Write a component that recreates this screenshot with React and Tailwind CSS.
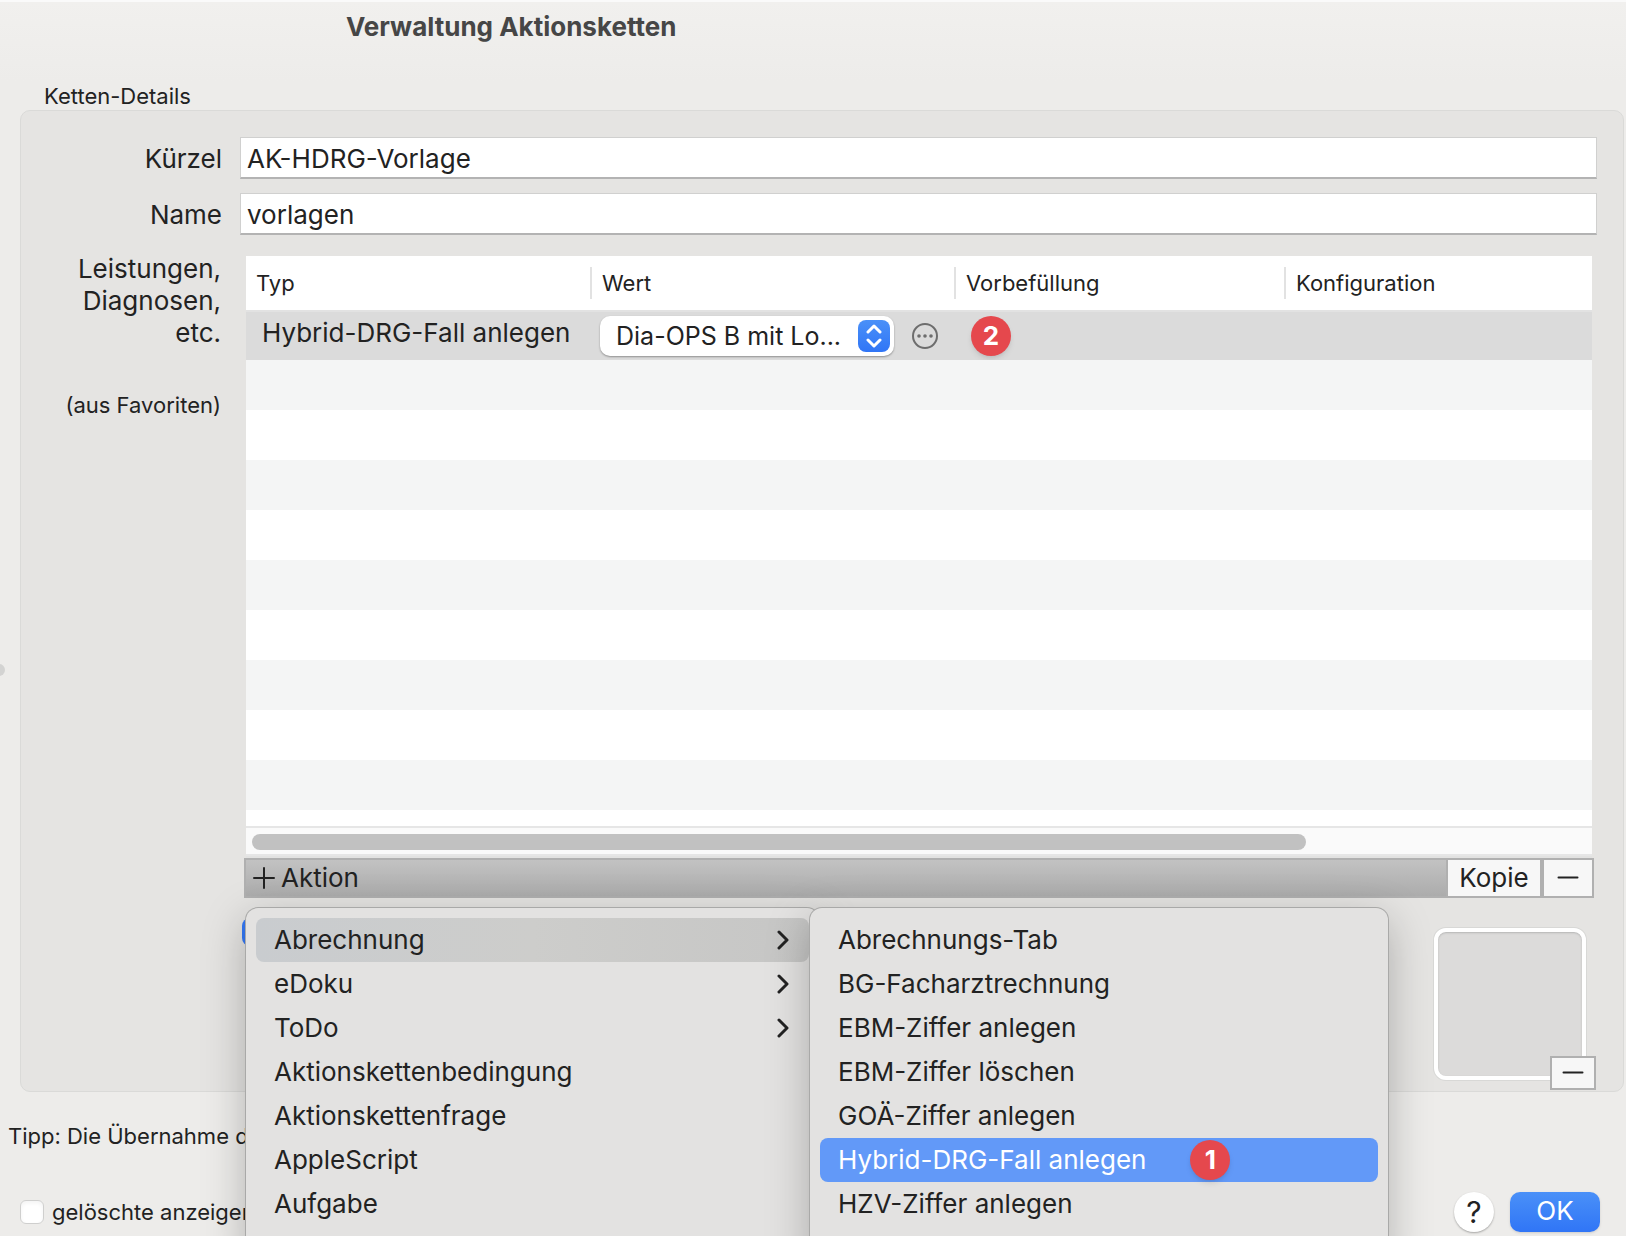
// App.jsx
import { useState } from "react";

const FONT = "font-['Inter','Liberation_Sans',sans-serif]";

const COLUMNS = [
  { label: "Typ", width: "w-[344px]" },
  { label: "Wert", width: "w-[364px]" },
  { label: "Vorbefüllung", width: "w-[330px]" },
  { label: "Konfiguration", width: "" },
];

const EMPTY_ROWS = 9;

const ACTION_MENU = [
  { label: "Abrechnung", submenu: true },
  { label: "eDoku", submenu: true },
  { label: "ToDo", submenu: true },
  { label: "Aktionskettenbedingung" },
  { label: "Aktionskettenfrage" },
  { label: "AppleScript" },
  { label: "Aufgabe" },
];

const BILLING_MENU = [
  { label: "Abrechnungs-Tab" },
  { label: "BG-Facharztrechnung" },
  { label: "EBM-Ziffer anlegen" },
  { label: "EBM-Ziffer löschen" },
  { label: "GOÄ-Ziffer anlegen" },
  { label: "Hybrid-DRG-Fall anlegen", badge: "1" },
  { label: "HZV-Ziffer anlegen" },
];

const Badge = ({ children }) => (
  <span className="flex size-10 items-center justify-center rounded-full bg-[#e5484d] text-[26px] leading-none font-bold text-white shadow-md">
    {children}
  </span>
);

const ChevronRight = () => (
  <svg width="12" height="20" viewBox="0 0 12 20" fill="none" aria-hidden="true">
    <path
      d="M2 2l8 8-8 8"
      stroke="currentColor"
      strokeWidth="3"
      strokeLinecap="round"
      strokeLinejoin="round"
    />
  </svg>
);

const Minus = () => (
  <svg width="22" height="22" viewBox="0 0 22 22" aria-hidden="true">
    <path d="M1.5 10.5h19" stroke="#222" strokeWidth="2" strokeLinecap="round" />
  </svg>
);

const TextField = ({ id, label, defaultValue }) => (
  <div className="flex items-center gap-[18px]">
    <label htmlFor={id} className="w-[201px] pt-0.5 text-right">
      {label}
    </label>
    <input
      id={id}
      type="text"
      defaultValue={defaultValue}
      className="h-[42px] min-w-0 flex-1 border border-b-2 border-[#d0d0cf] border-b-[#b3b3b3] bg-white px-1.5 pt-0.5 outline-none"
    />
  </div>
);

const Menu = ({ items, active, activeClass, className }) => (
  <ul
    role="menu"
    className={`absolute rounded-xl bg-[#e3e2e1] px-2.5 pt-2.5 pb-10 shadow-[0_0_0_1px_#a9a9a8,0_12px_44px_rgba(0,0,0,0.26)] ${className}`}
  >
    {items.map((item) => (
      <li key={item.label} role="none">
        <button
          role="menuitem"
          className={`flex h-11 w-full items-center rounded-lg pl-[18px] text-left ${
            item.label === active ? activeClass : ""
          }`}
        >
          <span>{item.label}</span>
          {item.badge && (
            <span className="ml-11">
              <Badge>{item.badge}</Badge>
            </span>
          )}
          {item.submenu && (
            <span className="mr-5 ml-auto">
              <ChevronRight />
            </span>
          )}
        </button>
      </li>
    ))}
  </ul>
);

const ValueSelect = () => (
  <div className="relative w-[294px]">
    <select
      aria-label="Wert"
      className="block h-10 w-full appearance-none rounded-[10px] bg-white pr-12 pl-4 text-[25px] shadow-[0_1px_2px_rgba(0,0,0,0.35)] outline-none"
    >
      <option>Dia-OPS B mit Lo...</option>
    </select>
    <span className="pointer-events-none absolute top-1 right-1 flex size-8 items-center justify-center rounded-lg bg-linear-to-b from-[#4a90f8] to-[#3075f6]">
      <svg width="16" height="24" viewBox="0 0 16 24" fill="none" aria-hidden="true">
        <path
          d="M2 8l6-6 6 6M2 16l6 6 6-6"
          stroke="white"
          strokeWidth="3"
          strokeLinecap="round"
          strokeLinejoin="round"
        />
      </svg>
    </span>
  </div>
);

const ActionTable = () => (
  <div className="mx-0.5 bg-white">
    <table className="w-full table-fixed border-collapse">
      <thead>
        <tr className="h-[55px] border-b-2 border-[#e2e2e2]">
          {COLUMNS.map((col, index) => (
            <th
              key={col.label}
              className={`p-0 text-left text-[22px] font-normal ${col.width}`}
            >
              <div
                className={`flex h-8 items-center ${
                  index > 0 ? "border-l-2 border-[#e2e2e2] pl-2.5" : "pl-2.5"
                }`}
              >
                {col.label}
              </div>
            </th>
          ))}
        </tr>
      </thead>
      <tbody>
        <tr className="h-[49px] bg-[#dbdbdb]">
          <td className="p-0 pb-1.5 pl-4">Hybrid-DRG-Fall anlegen</td>
          <td className="p-0 pl-2.5">
            <div className="flex items-center gap-[18px]">
              <ValueSelect />
              <button aria-label="Wert bearbeiten">
                <svg width="26" height="26" viewBox="0 0 26 26" fill="none">
                  <circle cx="13" cy="13" r="12" stroke="#6d6d6d" strokeWidth="2" />
                  <circle cx="7" cy="13" r="1.8" fill="#6d6d6d" />
                  <circle cx="13" cy="13" r="1.8" fill="#6d6d6d" />
                  <circle cx="19" cy="13" r="1.8" fill="#6d6d6d" />
                </svg>
              </button>
            </div>
          </td>
          <td className="p-0 pl-[17px]">
            <Badge>2</Badge>
          </td>
          <td />
        </tr>
        {Array.from({ length: EMPTY_ROWS }, (_, index) => (
          <tr key={index} className="h-[50px] odd:bg-white even:bg-[#f4f5f5]">
            <td colSpan={4} />
          </tr>
        ))}
      </tbody>
    </table>
    <div className="h-4" />
    <div className="border-y-2 border-[#e6e6e6] bg-[#fafafa] px-1.5 pt-1.5 pb-1">
      <div className="h-4 w-[79%] rounded-full bg-[#c1c1c1]" />
    </div>
    <div className="h-0.5 bg-[#e2e2e1]" />
  </div>
);

const Toolbar = () => (
  <div className="relative">
    <div className="flex h-10 border-2 border-[#b0b0b0] bg-linear-to-b from-[#c2c2c2] to-[#acacac]">
      <button className="flex flex-1 items-center gap-1.5 pl-[7px]">
        <svg width="22" height="22" viewBox="0 0 22 22" aria-hidden="true">
          <path
            d="M1 11h20M11 1v20"
            stroke="#222"
            strokeWidth="2"
            strokeLinecap="round"
          />
        </svg>
        Aktion
      </button>
      <button className="w-24 border-x-2 border-[#b0b0b0] bg-[#f7f7f7]">Kopie</button>
      <button
        aria-label="Aktion entfernen"
        className="flex w-[50px] items-center justify-center border-l-2 border-[#b0b0b0] bg-[#f7f7f7]"
      >
        <Minus />
      </button>
    </div>
    <Menu
      items={ACTION_MENU}
      active="Abrechnung"
      activeClass="bg-linear-to-r from-[#c9cccf] via-[#cdcdcb] to-[#c6c6c5]"
      className="top-[50px] left-0.5 z-10 w-[573px]"
    />
    <Menu
      items={BILLING_MENU}
      active="Hybrid-DRG-Fall anlegen"
      activeClass="bg-[#6299f8] text-white"
      className="top-[50px] left-[566px] z-20 w-[578px]"
    />
  </div>
);

export default function App() {
  const [showDeleted, setShowDeleted] = useState(false);

  return (
    <main
      className={`relative h-screen overflow-hidden bg-[#edecea] text-[26px] leading-8 text-[#222] ${FONT}`}
    >
      <header className="h-[82px] border-t-2 border-[#fafafa] bg-linear-to-b from-[#f1f0ee] to-[#edecea] pt-[9px] pl-[346px]">
        <h1 className="font-bold text-[#464646]">Verwaltung Aktionsketten</h1>
      </header>

      {/* grip of the window divider */}
      <span className="absolute top-[664px] -left-[7px] size-3 rounded-full bg-[#d3d3d2]" />

      <h2 className="pl-11 text-[22px] leading-7">Ketten-Details</h2>
      <section className="mr-0.5 ml-5 rounded-[10px] border border-[#dadad8] bg-[#e5e4e2] pt-[26px] pr-[26px]">
        <div className="flex flex-col gap-3.5">
          <TextField id="kuerzel" label="Kürzel" defaultValue="AK-HDRG-Vorlage" />
          <TextField id="name" label="Name" defaultValue="vorlagen" />
        </div>

        <div className="mt-[21px] flex gap-[23px] pr-[3px]">
          <div className="w-[200px] shrink-0 text-right">
            <p className="-mt-[3px] pl-8">Leistungen, Diagnosen, etc.</p>
            <p className="mt-10 text-[22px]">(aus Favoriten)</p>
          </div>

          <div className="min-w-0 flex-1">
            <ActionTable />
            <Toolbar />
            <div className="relative flex h-[193px] justify-between pt-5 pr-2">
              <button
                aria-label="Aktivieren"
                className="-ml-0.5 h-7 w-10 rounded-lg bg-[#3478f6]"
              />
              <div className="mt-2.5 h-[152px] w-[152px] rounded-xl border-4 border-white bg-[#dcdbda] shadow-[0_0_0_1px_#d8d8d6,inset_0_1px_2px_#b5b5b5]" />
              <button
                aria-label="Bild entfernen"
                className="absolute -right-0.5 bottom-px flex h-[34px] w-[46px] items-center justify-center border-2 border-[#b0b0b0] bg-[#f7f7f7]"
              >
                <Minus />
              </button>
            </div>
          </div>
        </div>
      </section>

      <p className="mt-7 pl-2 text-[22px]">Tipp: Die Übernahme der</p>

      <footer className="mt-10 flex items-center pr-[26px] pl-5">
        <label className="flex items-center gap-2 text-[22px]">
          <input
            type="checkbox"
            checked={showDeleted}
            onChange={(e) => setShowDeleted(e.target.checked)}
            className="size-6 appearance-none rounded-md border border-[#cfcfce] bg-white shadow-inner checked:bg-[#3478f6]"
          />
          gelöschte anzeigen
        </label>
        <button
          aria-label="Hilfe"
          className="ml-auto size-10 rounded-full bg-white text-[30px] shadow-[0_1px_2px_rgba(0,0,0,0.3)]"
        >
          ?
        </button>
        <button className="ml-4 h-10 w-[90px] rounded-[10px] bg-linear-to-b from-[#4a90f8] to-[#3075f6] pb-0.5 text-white shadow-sm">
          OK
        </button>
      </footer>
    </main>
  );
}
